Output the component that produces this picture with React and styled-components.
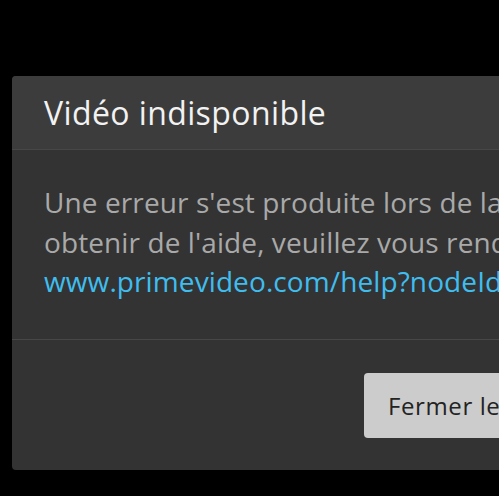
import React from 'react'
import styled, { createGlobalStyle } from 'styled-components'

const GlobalStyle = createGlobalStyle`
    html, body {
        margin: 0;
        padding: 0;
        background: #000;
        overflow: hidden;
    }
    body {
        font-family: "Open Sans", "Noto Sans", sans-serif;
    }
`;

const Page = styled.div`
    width: 499px;
    height: 496px;
    padding: 76px 0 0 12px;
    box-sizing: border-box;
    overflow: hidden;
`;

const Dialog = styled.div`
    width: 633px;
    height: 394px;
    display: flex;
    flex-direction: column;
    background: #333333;
    border-radius: 4px;
    overflow: hidden;
`;

const Header = styled.div`
    height: 73px;
    display: flex;
    align-items: center;
    padding: 0 32px;
    background: #3c3c3c;
    border-bottom: 1px solid #474747;
`;

const Title = styled.h1`
    margin: 0;
    font-size: 32px;
    font-weight: 400;
    letter-spacing: 0.4px;
    color: #f2f2f2;
    white-space: nowrap;
`;

const Body = styled.div`
    padding: 33px 32px 0;
    height: 190px;
    box-sizing: border-box;
    border-bottom: 1px solid #474747;
`;

const Message = styled.p`
    margin: 0;
    font-size: 28px;
    line-height: 39.5px;
    letter-spacing: 0.1px;
    color: #a9a9a9;
    white-space: nowrap;
`;

const HelpLink = styled.a`
    color: #3fbdee;
    text-decoration: none;
`;

const Footer = styled.div`
    flex: 1;
    display: flex;
    align-items: center;
    justify-content: flex-end;
    padding: 0 32px;
`;

const Button = styled.button`
    height: 65px;
    padding: 0 24px;
    border: none;
    border-radius: 4px;
    background: #cccccc;
    color: #232323;
    font-family: inherit;
    font-size: 24px;
    letter-spacing: 0.6px;
    white-space: nowrap;
`;

function App() {
    return (
        <Page>
            <GlobalStyle />
            <Dialog>
                <Header>
                    <Title>Vidéo indisponible</Title>
                </Header>
                <Body>
                    <Message>
                        Une erreur s'est produite lors de la lecture de cette vidéo. Pour<br />
                        obtenir de l'aide, veuillez vous rendre sur<br />
                        <HelpLink href="#">www.primevideo.com/help?nodeId=201829430</HelpLink>
                    </Message>
                </Body>
                <Footer>
                    <Button>Fermer le lecteur</Button>
                </Footer>
            </Dialog>
        </Page>
    );
}

export default App;
